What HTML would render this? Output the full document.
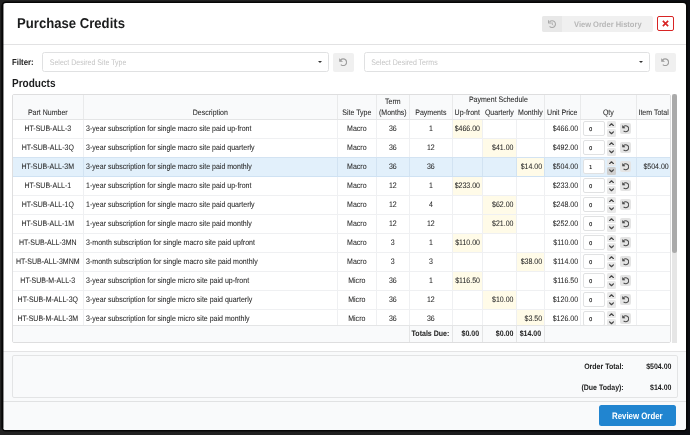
<!DOCTYPE html>
<html lang="en"><head><meta charset="utf-8"><title>Purchase Credits</title>
<style>
*{box-sizing:border-box;margin:0;padding:0}
html,body{text-rendering:geometricPrecision;width:690px;height:435px;overflow:hidden;background:linear-gradient(90deg,#222 0,#1f1f1f 60%,#0c0d12 100%);font-family:"Liberation Sans",Arial,sans-serif;color:#222}
.abs{position:absolute}
#edge{position:absolute;left:0;top:0;width:1px;height:100%;background:rgba(12,12,12,.45);z-index:5}
#in{position:absolute;left:.5px;top:0;width:682.5px;height:100%}
#modal{will-change:transform;position:absolute;left:3px;top:3px;width:683px;height:427px;background:#fff;border-radius:3px;overflow:hidden;box-shadow:0 0 0 1.6px #060606}
.lato{font-family:"Liberation Sans",Arial,sans-serif;font-weight:bold;display:inline-block;transform-origin:0 50%;white-space:nowrap}
#title{position:absolute;left:13.7px;top:11px;font-size:14.2px;line-height:20px;color:#1b1c1d;transform:scaleX(.925)}
#hdrline{position:absolute;left:0;right:0;top:41px;height:1px;background:#e2e2e3}
#hist{position:absolute;left:538.7px;top:12.6px;width:110.4px;height:16.6px;background:#f0f0f0;border-radius:2px;overflow:hidden}
#hist .ic{position:absolute;left:0;top:0;width:20px;height:100%;background:#e8e8e8}
#hist .ic svg{position:absolute;left:5.8px;top:4.5px}
#hist .tx{position:absolute;left:31.9px;top:4.4px;font-size:8px;line-height:10px;color:#b6b6b6;transform:scaleX(.94)}
#close{position:absolute;left:653.6px;top:13px;width:16.8px;height:14.8px;border:1.2px solid #d82424;border-radius:2px;background:#fff}
#close svg{position:absolute;left:3.9px;top:3.1px}
.lbl{position:absolute;left:8.5px;top:53.9px;font-size:8.7px;line-height:11px;font-weight:bold;color:#222;transform:scaleX(.9);transform-origin:0 50%;white-space:nowrap}
.dd{position:absolute;top:49px;height:20px;border:1px solid #e0e1e2;border-radius:2.5px;background:#fff}
.dd .ph{transform:scaleY(1.16);transform-origin:50% 62%;position:absolute;left:6.6px;top:5.5px;font-size:7px;line-height:10px;color:#c4c4c4;white-space:nowrap}
.dd .car{position:absolute;right:5.6px;top:8px;width:0;height:0;border-left:2.2px solid transparent;border-right:2.2px solid transparent;border-top:2.6px solid #333}
.rb{position:absolute;top:49.6px;width:21px;height:19.2px;background:#f0f0f0;border-radius:2px}
.rb svg{position:absolute;left:6px;top:5px}
#prod{position:absolute;left:8.5px;top:74.3px;font-size:11.6px;line-height:14px;color:#1b1c1d;transform:scaleX(.865)}
#tbl{-webkit-text-stroke:.05px #262626;position:absolute;left:8.8px;top:91.3px;width:658.6px;height:249px;border:1px solid #dededf;border-radius:2px;overflow:hidden;background:#fff;font-size:7.02px;color:#262626}
#thead{position:absolute;left:0;top:0;width:100%;height:25px;background:#f9fafb;border-bottom:1px solid #e4e5e6}
#thead .h{transform:scaleY(1.13);transform-origin:50% 100%;position:absolute;bottom:.8px;line-height:9.1px;text-align:center;white-space:nowrap}
#thead .vb{position:absolute;top:0;bottom:0;width:1px;background:#e9eaeb}
#tbody{position:absolute;left:0;top:25px;width:100%;height:205px;overflow:hidden}
.row{display:grid;grid-template-columns:71.0px 254.0px 39.0px 33.0px 43.1px 29.8px 34.3px 27.8px 36.0px 56.1px 34.4px;height:19px;border-bottom:1px solid #eff0f2}
.row.sel{background:#e2f0fb;border-bottom-color:#cfe2f3}
.c{border-right:1px solid #eff0f2;line-height:18px;padding-top:.7px;white-space:nowrap;overflow:hidden;position:relative}
.row.sel .c{border-right-color:#d2e3f2}
.c.last{border-right:none;padding-right:3px}
.t{display:inline-block;transform:scaleY(1.13);transform-origin:50% 62%}
.ctr{text-align:center;padding-right:1px}
.lft{text-align:left;padding-left:1.8px}
.rgt{text-align:right;padding-right:2.2px}
.hl{background:#fffbe8}
.q{padding-right:3px}
.row.pre{border-bottom-color:#d3e3f2}
.inp{position:absolute;left:1.9px;top:1.2px;width:21.9px;height:14.8px;border:1px solid #e0e1e2;border-radius:2px;background:#fff;font-family:"DejaVu Sans","Liberation Sans",sans-serif;font-size:5.3px;line-height:16.6px;padding-left:4.8px;color:#111;-webkit-text-stroke:.12px #111;text-align:left}
.sp{position:absolute;left:25.4px;width:9.4px;height:6.8px;background:#e9e9e9;border-radius:1.5px}
.sp svg{position:absolute;left:2.2px;top:1.6px}
.sp.up{top:1.1px}
.sp.dn{top:9.2px;height:7.2px}
.sp.act{background:#cfcfcf}
.rs{position:absolute;left:38.4px;top:3.2px;width:11.8px;height:10.6px;background:#e4e4e4;border-radius:2px}
.rs svg{position:absolute;left:2.1px;top:1.7px}
#tfoot{position:absolute;left:0;top:230px;width:100%;height:17px;background:#f9fafb;border-top:1px solid #e4e5e6;font-weight:bold}
#tfoot .f{position:absolute;top:0;height:100%;line-height:16px;padding-top:.9px;text-align:right;padding-right:2.6px;border-left:1px solid #e4e5e6}
#sbtrack{position:absolute;left:668.2px;top:91.3px;width:5.5px;height:248.6px;background:#e6e6e6}
#sbthumb{position:absolute;left:668.2px;top:91.4px;width:5.4px;height:158.8px;background:#aaa;border-radius:2.7px}
#sec{position:absolute;left:0;top:347.8px;width:100%;height:50px;background:#f9fafb;border-top:1.3px solid #e4e4e5}
#box{position:absolute;left:8.4px;top:351.6px;width:666px;height:43.8px;border:1px solid #e3e4e5;border-radius:2px;background:#f9fafb}
.tot{transform:scaleY(1.13);transform-origin:50% 62%;position:absolute;font-size:7px;line-height:9px;font-weight:bold;color:#222;text-align:right;white-space:nowrap}
#actions{position:absolute;left:0;top:398px;width:100%;height:30px;background:#f9fafb;border-top:1px solid #e1e2e3}
#review{position:absolute;left:595.6px;top:402.4px;width:76.6px;height:21px;background:#2185d0;border-radius:2.5px}
#review span{position:absolute;left:13px;top:4.6px;font-size:9.3px;line-height:12px;color:#fff;transform:scaleX(.845)}
</style></head><body>
<div id="modal">
 <div id="hdrline"></div><div id="sec"></div><div id="actions"></div><div id="edge"></div>
 <div id="in">
 <span id="title" class="lato">Purchase Credits</span>
 <div id="hist"><div class="ic"><svg viewBox="0 0 512 512" width="8.2" height="8.2"><path d="M36 14 V190 H210" fill="none" stroke="#a8a8a8" stroke-width="70" stroke-linejoin="round"/><path d="M98 114 A212 212 0 1 1 98 398" fill="none" stroke="#a8a8a8" stroke-width="66"/><path d="M262 150 V272 L330 322" fill="none" stroke="#a8a8a8" stroke-width="56"/></svg></div><span class="tx lato">View Order History</span></div>
 <div id="close"><svg viewBox="0 0 10 10" width="7" height="7"><path d="M1.2 1.2 L8.8 8.8 M8.8 1.2 L1.2 8.8" stroke="#d82424" stroke-width="2.3" fill="none"/></svg></div>
 <div class="lbl">Filter:</div>
 <div class="dd" style="left:38.7px;width:286.6px"><span class="ph">Select Desired Site Type</span><i class="car"></i></div>
 <div class="rb" style="left:329.4px"><svg viewBox="0 0 512 512" width="8.4" height="8.4"><path d="M30 40 V215 H205 Z" fill="#9e9e9e" stroke="#9e9e9e" stroke-width="36" stroke-linejoin="round"/><path d="M104 120 A206 206 0 1 1 110 402" fill="none" stroke="#9e9e9e" stroke-width="72"/></svg></div>
 <div class="dd" style="left:360.2px;width:286.4px"><span class="ph">Select Desired Terms</span><i class="car"></i></div>
 <div class="rb" style="left:651.2px"><svg viewBox="0 0 512 512" width="8.4" height="8.4"><path d="M30 40 V215 H205 Z" fill="#9e9e9e" stroke="#9e9e9e" stroke-width="36" stroke-linejoin="round"/><path d="M104 120 A206 206 0 1 1 110 402" fill="none" stroke="#9e9e9e" stroke-width="72"/></svg></div>
 <span id="prod" class="lato">Products</span>
 <div id="tbl">
  <div id="thead">
   <div class="h" style="left:-1.0px;width:71.0px;">Part Number</div>
   <div class="h" style="left:70.0px;width:254.0px;">Description</div>
   <div class="h" style="left:324.0px;width:39.0px;">Site Type</div>
   <div class="h" style="left:363.0px;width:33.0px;">Term<br>(Months)</div>
   <div class="h" style="left:396.0px;width:43.1px;">Payments</div>
   <div class="h" style="left:439.1px;width:91.9px;bottom:13.9px;">Payment Schedule</div>
   <div class="h" style="left:439.1px;width:29.8px;">Up-front</div>
   <div class="h" style="left:468.9px;width:34.3px;">Quarterly</div>
   <div class="h" style="left:503.2px;width:27.8px;">Monthly</div>
   <div class="h" style="left:531.0px;width:36.0px;">Unit Price</div>
   <div class="h" style="left:567.0px;width:56.1px;">Qty</div>
   <div class="h" style="left:623.1px;width:34.4px;">Item Total</div>
   <div class="vb" style="left:69.5px"></div>
   <div class="vb" style="left:323.5px"></div>
   <div class="vb" style="left:362.5px"></div>
   <div class="vb" style="left:395.5px"></div>
   <div class="vb" style="left:438.6px"></div>
   <div class="vb" style="left:530.5px"></div>
   <div class="vb" style="left:566.5px"></div>
   <div class="vb" style="left:622.6px"></div>
  </div>
  <div id="tbody">
   <div class="row"><div class="c ctr"><span class="t">HT-SUB-ALL-3</span></div><div class="c lft"><span class="t">3-year subscription for single macro site paid up-front</span></div><div class="c ctr"><span class="t">Macro</span></div><div class="c ctr"><span class="t">36</span></div><div class="c ctr"><span class="t">1</span></div><div class="c rgt hl"><span class="t">$466.00</span></div><div class="c rgt q"></div><div class="c rgt"></div><div class="c rgt"><span class="t">$466.00</span></div><div class="c qty"><span class="inp">0</span><span class="sp up"><svg viewBox="0 0 10 7" width="5" height="3.5"><path d="M1.2 5.2 L5 1.6 L8.8 5.2" fill="none" stroke="#444" stroke-width="2.5" stroke-linecap="round" stroke-linejoin="round"/></svg></span><span class="sp dn"><svg viewBox="0 0 10 7" width="5" height="3.5"><path d="M1.2 1.8 L5 5.4 L8.8 1.8" fill="none" stroke="#444" stroke-width="2.5" stroke-linecap="round" stroke-linejoin="round"/></svg></span><span class="rs"><svg viewBox="0 0 512 512" width="7.4" height="7.4"><path d="M30 40 V215 H205 Z" fill="#4c4c4c" stroke="#4c4c4c" stroke-width="36" stroke-linejoin="round"/><path d="M104 120 A206 206 0 1 1 110 402" fill="none" stroke="#4c4c4c" stroke-width="74"/></svg></span></div><div class="c rgt last"></div></div>
   <div class="row pre"><div class="c ctr"><span class="t">HT-SUB-ALL-3Q</span></div><div class="c lft"><span class="t">3-year subscription for single macro site paid quarterly</span></div><div class="c ctr"><span class="t">Macro</span></div><div class="c ctr"><span class="t">36</span></div><div class="c ctr"><span class="t">12</span></div><div class="c rgt"></div><div class="c rgt q hl"><span class="t">$41.00</span></div><div class="c rgt"></div><div class="c rgt"><span class="t">$492.00</span></div><div class="c qty"><span class="inp">0</span><span class="sp up"><svg viewBox="0 0 10 7" width="5" height="3.5"><path d="M1.2 5.2 L5 1.6 L8.8 5.2" fill="none" stroke="#444" stroke-width="2.5" stroke-linecap="round" stroke-linejoin="round"/></svg></span><span class="sp dn"><svg viewBox="0 0 10 7" width="5" height="3.5"><path d="M1.2 1.8 L5 5.4 L8.8 1.8" fill="none" stroke="#444" stroke-width="2.5" stroke-linecap="round" stroke-linejoin="round"/></svg></span><span class="rs"><svg viewBox="0 0 512 512" width="7.4" height="7.4"><path d="M30 40 V215 H205 Z" fill="#4c4c4c" stroke="#4c4c4c" stroke-width="36" stroke-linejoin="round"/><path d="M104 120 A206 206 0 1 1 110 402" fill="none" stroke="#4c4c4c" stroke-width="74"/></svg></span></div><div class="c rgt last"></div></div>
   <div class="row sel"><div class="c ctr"><span class="t">HT-SUB-ALL-3M</span></div><div class="c lft"><span class="t">3-year subscription for single macro site paid monthly</span></div><div class="c ctr"><span class="t">Macro</span></div><div class="c ctr"><span class="t">36</span></div><div class="c ctr"><span class="t">36</span></div><div class="c rgt"></div><div class="c rgt q"></div><div class="c rgt hl"><span class="t">$14.00</span></div><div class="c rgt"><span class="t">$504.00</span></div><div class="c qty"><span class="inp">1</span><span class="sp up"><svg viewBox="0 0 10 7" width="5" height="3.5"><path d="M1.2 5.2 L5 1.6 L8.8 5.2" fill="none" stroke="#444" stroke-width="2.5" stroke-linecap="round" stroke-linejoin="round"/></svg></span><span class="sp dn act"><svg viewBox="0 0 10 7" width="5" height="3.5"><path d="M1.2 1.8 L5 5.4 L8.8 1.8" fill="none" stroke="#444" stroke-width="2.5" stroke-linecap="round" stroke-linejoin="round"/></svg></span><span class="rs"><svg viewBox="0 0 512 512" width="7.4" height="7.4"><path d="M30 40 V215 H205 Z" fill="#4c4c4c" stroke="#4c4c4c" stroke-width="36" stroke-linejoin="round"/><path d="M104 120 A206 206 0 1 1 110 402" fill="none" stroke="#4c4c4c" stroke-width="74"/></svg></span></div><div class="c rgt last"><span class="t">$504.00</span></div></div>
   <div class="row"><div class="c ctr"><span class="t">HT-SUB-ALL-1</span></div><div class="c lft"><span class="t">1-year subscription for single macro site paid up-front</span></div><div class="c ctr"><span class="t">Macro</span></div><div class="c ctr"><span class="t">12</span></div><div class="c ctr"><span class="t">1</span></div><div class="c rgt hl"><span class="t">$233.00</span></div><div class="c rgt q"></div><div class="c rgt"></div><div class="c rgt"><span class="t">$233.00</span></div><div class="c qty"><span class="inp">0</span><span class="sp up"><svg viewBox="0 0 10 7" width="5" height="3.5"><path d="M1.2 5.2 L5 1.6 L8.8 5.2" fill="none" stroke="#444" stroke-width="2.5" stroke-linecap="round" stroke-linejoin="round"/></svg></span><span class="sp dn"><svg viewBox="0 0 10 7" width="5" height="3.5"><path d="M1.2 1.8 L5 5.4 L8.8 1.8" fill="none" stroke="#444" stroke-width="2.5" stroke-linecap="round" stroke-linejoin="round"/></svg></span><span class="rs"><svg viewBox="0 0 512 512" width="7.4" height="7.4"><path d="M30 40 V215 H205 Z" fill="#4c4c4c" stroke="#4c4c4c" stroke-width="36" stroke-linejoin="round"/><path d="M104 120 A206 206 0 1 1 110 402" fill="none" stroke="#4c4c4c" stroke-width="74"/></svg></span></div><div class="c rgt last"></div></div>
   <div class="row"><div class="c ctr"><span class="t">HT-SUB-ALL-1Q</span></div><div class="c lft"><span class="t">1-year subscription for single macro site paid quarterly</span></div><div class="c ctr"><span class="t">Macro</span></div><div class="c ctr"><span class="t">12</span></div><div class="c ctr"><span class="t">4</span></div><div class="c rgt"></div><div class="c rgt q hl"><span class="t">$62.00</span></div><div class="c rgt"></div><div class="c rgt"><span class="t">$248.00</span></div><div class="c qty"><span class="inp">0</span><span class="sp up"><svg viewBox="0 0 10 7" width="5" height="3.5"><path d="M1.2 5.2 L5 1.6 L8.8 5.2" fill="none" stroke="#444" stroke-width="2.5" stroke-linecap="round" stroke-linejoin="round"/></svg></span><span class="sp dn"><svg viewBox="0 0 10 7" width="5" height="3.5"><path d="M1.2 1.8 L5 5.4 L8.8 1.8" fill="none" stroke="#444" stroke-width="2.5" stroke-linecap="round" stroke-linejoin="round"/></svg></span><span class="rs"><svg viewBox="0 0 512 512" width="7.4" height="7.4"><path d="M30 40 V215 H205 Z" fill="#4c4c4c" stroke="#4c4c4c" stroke-width="36" stroke-linejoin="round"/><path d="M104 120 A206 206 0 1 1 110 402" fill="none" stroke="#4c4c4c" stroke-width="74"/></svg></span></div><div class="c rgt last"></div></div>
   <div class="row"><div class="c ctr"><span class="t">HT-SUB-ALL-1M</span></div><div class="c lft"><span class="t">1-year subscription for single macro site paid monthly</span></div><div class="c ctr"><span class="t">Macro</span></div><div class="c ctr"><span class="t">12</span></div><div class="c ctr"><span class="t">12</span></div><div class="c rgt"></div><div class="c rgt q hl"><span class="t">$21.00</span></div><div class="c rgt"></div><div class="c rgt"><span class="t">$252.00</span></div><div class="c qty"><span class="inp">0</span><span class="sp up"><svg viewBox="0 0 10 7" width="5" height="3.5"><path d="M1.2 5.2 L5 1.6 L8.8 5.2" fill="none" stroke="#444" stroke-width="2.5" stroke-linecap="round" stroke-linejoin="round"/></svg></span><span class="sp dn"><svg viewBox="0 0 10 7" width="5" height="3.5"><path d="M1.2 1.8 L5 5.4 L8.8 1.8" fill="none" stroke="#444" stroke-width="2.5" stroke-linecap="round" stroke-linejoin="round"/></svg></span><span class="rs"><svg viewBox="0 0 512 512" width="7.4" height="7.4"><path d="M30 40 V215 H205 Z" fill="#4c4c4c" stroke="#4c4c4c" stroke-width="36" stroke-linejoin="round"/><path d="M104 120 A206 206 0 1 1 110 402" fill="none" stroke="#4c4c4c" stroke-width="74"/></svg></span></div><div class="c rgt last"></div></div>
   <div class="row"><div class="c ctr"><span class="t">HT-SUB-ALL-3MN</span></div><div class="c lft"><span class="t">3-month subscription for single macro site paid upfront</span></div><div class="c ctr"><span class="t">Macro</span></div><div class="c ctr"><span class="t">3</span></div><div class="c ctr"><span class="t">1</span></div><div class="c rgt hl"><span class="t">$110.00</span></div><div class="c rgt q"></div><div class="c rgt"></div><div class="c rgt"><span class="t">$110.00</span></div><div class="c qty"><span class="inp">0</span><span class="sp up"><svg viewBox="0 0 10 7" width="5" height="3.5"><path d="M1.2 5.2 L5 1.6 L8.8 5.2" fill="none" stroke="#444" stroke-width="2.5" stroke-linecap="round" stroke-linejoin="round"/></svg></span><span class="sp dn"><svg viewBox="0 0 10 7" width="5" height="3.5"><path d="M1.2 1.8 L5 5.4 L8.8 1.8" fill="none" stroke="#444" stroke-width="2.5" stroke-linecap="round" stroke-linejoin="round"/></svg></span><span class="rs"><svg viewBox="0 0 512 512" width="7.4" height="7.4"><path d="M30 40 V215 H205 Z" fill="#4c4c4c" stroke="#4c4c4c" stroke-width="36" stroke-linejoin="round"/><path d="M104 120 A206 206 0 1 1 110 402" fill="none" stroke="#4c4c4c" stroke-width="74"/></svg></span></div><div class="c rgt last"></div></div>
   <div class="row"><div class="c ctr"><span class="t">HT-SUB-ALL-3MNM</span></div><div class="c lft"><span class="t">3-month subscription for single macro site paid monthly</span></div><div class="c ctr"><span class="t">Macro</span></div><div class="c ctr"><span class="t">3</span></div><div class="c ctr"><span class="t">3</span></div><div class="c rgt"></div><div class="c rgt q"></div><div class="c rgt hl"><span class="t">$38.00</span></div><div class="c rgt"><span class="t">$114.00</span></div><div class="c qty"><span class="inp">0</span><span class="sp up"><svg viewBox="0 0 10 7" width="5" height="3.5"><path d="M1.2 5.2 L5 1.6 L8.8 5.2" fill="none" stroke="#444" stroke-width="2.5" stroke-linecap="round" stroke-linejoin="round"/></svg></span><span class="sp dn"><svg viewBox="0 0 10 7" width="5" height="3.5"><path d="M1.2 1.8 L5 5.4 L8.8 1.8" fill="none" stroke="#444" stroke-width="2.5" stroke-linecap="round" stroke-linejoin="round"/></svg></span><span class="rs"><svg viewBox="0 0 512 512" width="7.4" height="7.4"><path d="M30 40 V215 H205 Z" fill="#4c4c4c" stroke="#4c4c4c" stroke-width="36" stroke-linejoin="round"/><path d="M104 120 A206 206 0 1 1 110 402" fill="none" stroke="#4c4c4c" stroke-width="74"/></svg></span></div><div class="c rgt last"></div></div>
   <div class="row"><div class="c ctr"><span class="t">HT-SUB-M-ALL-3</span></div><div class="c lft"><span class="t">3-year subscription for single micro site paid up-front</span></div><div class="c ctr"><span class="t">Micro</span></div><div class="c ctr"><span class="t">36</span></div><div class="c ctr"><span class="t">1</span></div><div class="c rgt hl"><span class="t">$116.50</span></div><div class="c rgt q"></div><div class="c rgt"></div><div class="c rgt"><span class="t">$116.50</span></div><div class="c qty"><span class="inp">0</span><span class="sp up"><svg viewBox="0 0 10 7" width="5" height="3.5"><path d="M1.2 5.2 L5 1.6 L8.8 5.2" fill="none" stroke="#444" stroke-width="2.5" stroke-linecap="round" stroke-linejoin="round"/></svg></span><span class="sp dn"><svg viewBox="0 0 10 7" width="5" height="3.5"><path d="M1.2 1.8 L5 5.4 L8.8 1.8" fill="none" stroke="#444" stroke-width="2.5" stroke-linecap="round" stroke-linejoin="round"/></svg></span><span class="rs"><svg viewBox="0 0 512 512" width="7.4" height="7.4"><path d="M30 40 V215 H205 Z" fill="#4c4c4c" stroke="#4c4c4c" stroke-width="36" stroke-linejoin="round"/><path d="M104 120 A206 206 0 1 1 110 402" fill="none" stroke="#4c4c4c" stroke-width="74"/></svg></span></div><div class="c rgt last"></div></div>
   <div class="row"><div class="c ctr"><span class="t">HT-SUB-M-ALL-3Q</span></div><div class="c lft"><span class="t">3-year subscription for single micro site paid quarterly</span></div><div class="c ctr"><span class="t">Micro</span></div><div class="c ctr"><span class="t">36</span></div><div class="c ctr"><span class="t">12</span></div><div class="c rgt"></div><div class="c rgt q hl"><span class="t">$10.00</span></div><div class="c rgt"></div><div class="c rgt"><span class="t">$120.00</span></div><div class="c qty"><span class="inp">0</span><span class="sp up"><svg viewBox="0 0 10 7" width="5" height="3.5"><path d="M1.2 5.2 L5 1.6 L8.8 5.2" fill="none" stroke="#444" stroke-width="2.5" stroke-linecap="round" stroke-linejoin="round"/></svg></span><span class="sp dn"><svg viewBox="0 0 10 7" width="5" height="3.5"><path d="M1.2 1.8 L5 5.4 L8.8 1.8" fill="none" stroke="#444" stroke-width="2.5" stroke-linecap="round" stroke-linejoin="round"/></svg></span><span class="rs"><svg viewBox="0 0 512 512" width="7.4" height="7.4"><path d="M30 40 V215 H205 Z" fill="#4c4c4c" stroke="#4c4c4c" stroke-width="36" stroke-linejoin="round"/><path d="M104 120 A206 206 0 1 1 110 402" fill="none" stroke="#4c4c4c" stroke-width="74"/></svg></span></div><div class="c rgt last"></div></div>
   <div class="row"><div class="c ctr"><span class="t">HT-SUB-M-ALL-3M</span></div><div class="c lft"><span class="t">3-year subscription for single micro site paid monthly</span></div><div class="c ctr"><span class="t">Micro</span></div><div class="c ctr"><span class="t">36</span></div><div class="c ctr"><span class="t">36</span></div><div class="c rgt"></div><div class="c rgt q"></div><div class="c rgt hl"><span class="t">$3.50</span></div><div class="c rgt"><span class="t">$126.00</span></div><div class="c qty"><span class="inp">0</span><span class="sp up"><svg viewBox="0 0 10 7" width="5" height="3.5"><path d="M1.2 5.2 L5 1.6 L8.8 5.2" fill="none" stroke="#444" stroke-width="2.5" stroke-linecap="round" stroke-linejoin="round"/></svg></span><span class="sp dn"><svg viewBox="0 0 10 7" width="5" height="3.5"><path d="M1.2 1.8 L5 5.4 L8.8 1.8" fill="none" stroke="#444" stroke-width="2.5" stroke-linecap="round" stroke-linejoin="round"/></svg></span><span class="rs"><svg viewBox="0 0 512 512" width="7.4" height="7.4"><path d="M30 40 V215 H205 Z" fill="#4c4c4c" stroke="#4c4c4c" stroke-width="36" stroke-linejoin="round"/><path d="M104 120 A206 206 0 1 1 110 402" fill="none" stroke="#4c4c4c" stroke-width="74"/></svg></span></div><div class="c rgt last"></div></div>
  </div>
  <div id="tfoot">
   <div class="f" style="left:-1.5px;width:397.0px;border-left:none;"></div>
   <div class="f" style="left:395.5px;width:43.1px;"><span class="t">Totals Due:</span></div>
   <div class="f" style="left:438.6px;width:29.8px;"><span class="t">$0.00</span></div>
   <div class="f" style="left:468.4px;width:34.3px;"><span class="t">$0.00</span></div>
   <div class="f" style="left:502.7px;width:27.8px;"><span class="t">$14.00</span></div>
   <div class="f" style="left:530.5px;width:126.5px;"></div>
  </div>
 </div>
 <div id="sbtrack"></div><div id="sbthumb"></div>
 <div id="box"></div>
 <div class="tot" style="right:62.3px;top:359.7px">Order Total:</div>
 <div class="tot" style="right:14.5px;top:359.7px">$504.00</div>
 <div class="tot" style="right:62.3px;top:380.7px">(Due Today):</div>
 <div class="tot" style="right:14.5px;top:380.7px">$14.00</div>
 <div id="review"><span class="lato">Review Order</span></div>
 </div>
</div>
</body></html>
